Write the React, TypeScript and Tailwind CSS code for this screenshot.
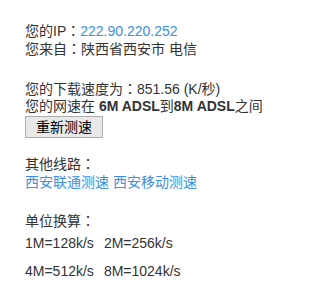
import React from "react";

function C() {
  return <span style={{ fontFamily: '"Noto Sans CJK TC", sans-serif' }}>：</span>;
}

export default function App() {
  return (
    <div
      className="w-[306px] h-[296px] bg-white text-[#333] text-[14px] pl-[25px] pt-[22px]"
      style={{ fontFamily: '"Liberation Sans", "Noto Sans CJK SC", sans-serif' }}
    >
      <div className="leading-[17px]">
        <div>
          您的IP<C /><a className="text-[#3c8ee8]">222.90.220.252</a>
        </div>
        <div>您来自<C />陕西省西安市 电信</div>
      </div>
      <div className="leading-[17px] mt-[22px]">
        <div>您的下载速度为<C />851.56 (K/秒)</div>
        <div>
          您的网速在 <b>6M ADSL</b>到<b>8M ADSL</b>之间
        </div>
      </div>
      <button className="mt-[1px] w-[78px] h-[22px] bg-[#e9e9e9] border border-[#adadad] text-black text-[14px] leading-[20px] flex items-center justify-center">
        重新测速
      </button>
      <div className="leading-[18px] mt-[16px]">
        <div>其他线路<C /></div>
        <div className="text-[#3c8ee8]">
          <a>西安联通测速</a> <a>西安移动测速</a>
        </div>
      </div>
      <div className="leading-[17px] mt-[21px]">
        <div>单位换算<C /></div>
      </div>
      <div className="leading-[17px] mt-[5px] flex gap-[10px]">
        <span>1M=128k/s</span>
        <span>2M=256k/s</span>
      </div>
      <div className="leading-[17px] mt-[11px] flex gap-[10px]">
        <span>4M=512k/s</span>
        <span>8M=1024k/s</span>
      </div>
    </div>
  );
}
